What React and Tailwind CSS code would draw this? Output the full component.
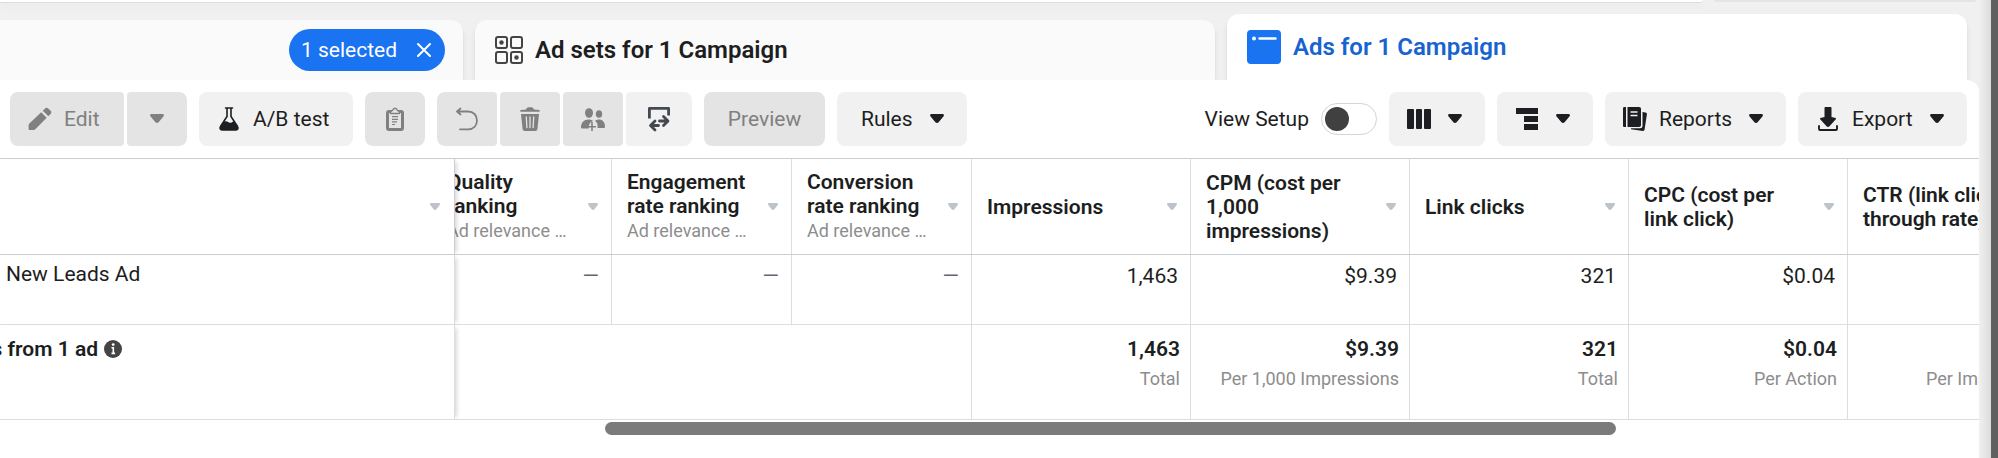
import React from 'react';

const columns = [
  { title: 'Impressions', value: '1,463', total: '1,463', note: 'Total' },
  { title: 'CPM (cost per 1,000 impressions)', value: '$9.39', total: '$9.39', note: 'Per 1,000 Impressions' },
  { title: 'Link clicks', value: '321', total: '321', note: 'Total' },
  { title: 'CPC (cost per link click)', value: '$0.04', total: '$0.04', note: 'Per Action' },
  { title: 'CTR (link click-through rate)', value: '', total: '', note: 'Per Impressions' },
];

const rankings = ['Quality ranking', 'Engagement rate ranking', 'Conversion rate ranking'];

const Caret = () => (
  <svg width="14" height="10" viewBox="0 0 14 10" fill="currentColor" className="shrink-0" aria-hidden="true">
    <path d="M1.5 0h11c1.5 0 1.8 1.6.9 2.6L8.600 8.300c-.9 1-2.300 1-3.200 0L.6 2.600C-.3 1.600 0 0 1.500 0z" />
  </svg>
);

const SortCaret = () => (
  <svg width="10" height="7" viewBox="0 0 10 7" className="shrink-0" fill="#bec3c9" aria-hidden="true">
    <path d="M1 0h8c1 0 1.300 1 .7 1.900L6.400 6.200c-.8 1-2 1-2.800 0L.3 1.900C-.3 1 0 0 1 0z" />
  </svg>
);

const PencilIcon = () => (
  <svg width="24" height="24" viewBox="0 0 24 24" fill="currentColor" aria-hidden="true">
    <path d="M13.200 5.300l5.500 5.500L7.300 22.200c-.5.5-1 .8-1.700.8H1.800C1 23 .6 22.600.6 21.800v-3.600c0-.7.300-1.200.8-1.700z" />
    <path d="M14.800 3.700L17.100 1.400c1-1 2.100-1 3.100 0l2.400 2.400c1 1 1 2.100 0 3.100L20.300 9.200z" />
  </svg>
);

const FlaskIcon = () => (
  <svg width="22" height="24" viewBox="0 0 22 24" aria-hidden="true">
    <path d="M6.500 1h7M8 1v8.500L1.500 19.500C.5 21.500 1.500 23 3.500 23h13c2 0 3-1.500 2-3.500L12 9.500V1" fill="none" stroke="currentColor" strokeWidth="1.600" strokeLinecap="round" />
    <path d="M4.500 14.500c2-.6 3.500-.4 5.500.9 1.500.9 3 .2 4.600-1.400l4 5.500c.8 1.800 0 3.500-1.500 3.500H3c-1.500 0-2.300-1.700-1.500-3.500z" fill="currentColor" />
  </svg>
);

const ClipboardIcon = () => (
  <svg width="18" height="24" viewBox="0 0 18 24" fill="none" stroke="currentColor" aria-hidden="true">
    <rect x="1.500" y="4.500" width="15" height="18" rx="1.500" strokeWidth="3" />
    <path d="M4.500 6.500V4.800L6.500 3.500c1-3 4-3 5 0l2 1.300v1.700z" fill="#e4e4e4" strokeWidth="1.300" strokeLinejoin="round" />
    <path d="M6 9.700h6M6 12.300h6M6 14.900h5M6 17.500h3" strokeWidth="1.200" />
  </svg>
);

const UndoIcon = () => (
  <svg width="22" height="24" viewBox="0 0 22 24" fill="none" stroke="currentColor" strokeWidth="1.800" strokeLinecap="round" strokeLinejoin="round" aria-hidden="true">
    <path d="M4.500 1.500L1 4.500l3.500 3M1.500 4.500H12c5.500 0 9 3.700 9 8.900S17.500 22.300 12 22.300H4" />
  </svg>
);

const TrashIcon = () => (
  <svg width="20" height="24" viewBox="0 0 20 24" aria-hidden="true">
    <path d="M.8 4.800c-.8 0-.8-1.500 0-1.700L6 2.500C6.800 1 7.500.3 8.500.3h3c1 0 1.700.7 2.500 2.200l5.200.6c.8.200.8 1.700 0 1.700z" fill="currentColor" />
    <path d="M1 7h18l-1.500 14.500c-.2 1.700-1 2.500-2.500 2.500H5c-1.500 0-2.300-.8-2.500-2.500z" fill="currentColor" />
    <path d="M6.300 10l.6 10.500M10 10v10.500M13.700 10l-.6 10.500" stroke="#e4e4e4" strokeWidth="1.300" strokeLinecap="round" />
  </svg>
);

const PeopleIcon = () => (
  <svg width="24" height="24" viewBox="0 0 24 24" fill="currentColor" aria-hidden="true">
    <ellipse cx="8" cy="6" rx="4" ry="4.800" />
    <ellipse cx="18" cy="7" rx="3.200" ry="3.800" />
    <path d="M0 20.500c0-5 3-8 7.500-8 2 0 3.500.5 4.500 1.500-3 1-4.500 3.500-4.300 7.500H1.500C.5 21.500 0 21.300 0 20.500zM14 14c1-1 2.300-1.500 4-1.500 3.500 0 6 2.700 6 7 0 1-.5 1.500-1.500 1.500h-6c.5-3.500-.5-6-2.500-7z" />
    <path d="M11 15v9M7 19.800h8" fill="none" stroke="currentColor" strokeWidth="1.600" />
  </svg>
);

const SwapIcon = () => (
  <svg width="22" height="26" viewBox="0 0 22 26" fill="none" stroke="#444950" strokeWidth="2.800" aria-hidden="true">
    <path d="M1.400 12.500V2.400h19.200V9.500" strokeLinejoin="round" />
    <path d="M11.500 15h8M15.500 10.500l4.500 4.500-4.500 4.500M10.500 19.500H3M7 15l-4.500 4.500L7 24" strokeLinecap="round" strokeLinejoin="round" />
  </svg>
);

const ColumnsIcon = () => (
  <svg width="24" height="20" viewBox="0 0 24 20" fill="currentColor" aria-hidden="true">
    <rect width="7" height="20" rx="1" />
    <rect x="9" width="6" height="20" rx="1" />
    <rect x="17" width="7" height="20" rx="1" />
  </svg>
);

const BreakdownIcon = () => (
  <svg width="24" height="22" viewBox="0 0 24 22" fill="currentColor" aria-hidden="true">
    <path d="M1 0h22v6H1zM9 8h14v6H9zM9 16h14v6H9z" />
  </svg>
);

const ReportsIcon = () => (
  <svg width="24" height="24" viewBox="0 0 24 24" fill="currentColor" aria-hidden="true">
    <path d="M1.500 0H3v20H1.500C.5 20 0 19.500 0 18.500v-17C0 .5.500 0 1.500 0zM4.500 0H16c1.300 0 2 .7 2 2v16c0 1.300-.7 2-2 2H4.500z" />
    <path d="M7.500 5h7M7.500 8.500h7" stroke="#f1f1f1" strokeWidth="1.400" />
    <path d="M19.500 5l3 .4c1 .1 1.600.8 1.400 1.800L21.600 22.500c-.1 1-.8 1.500-1.800 1.400L8 22.300v-1h9c1.700 0 2.500-.8 2.500-2.500z" />
  </svg>
);

const ExportIcon = () => (
  <svg width="20" height="24" viewBox="0 0 20 24" fill="currentColor" aria-hidden="true">
    <path d="M7.500 0h5c.8 0 1 .5 1 1v9l4 1c.6.2.7.8.3 1.300l-6.300 7c-.9 1-2.100 1-3 0l-6.300-7c-.4-.5-.3-1.100.3-1.300l4-1V1c0-.5.200-1 1-1z" />
    <path d="M1 19v3c0 .7.300 1 1 1h16c.7 0 1-.3 1-1v-3" fill="none" stroke="currentColor" strokeWidth="1.900" strokeLinecap="round" />
  </svg>
);

const GridIcon = () => (
  <svg width="28" height="28" viewBox="0 0 28 28" fill="none" stroke="#444" strokeWidth="2" aria-hidden="true">
    <rect x="1" y="1" width="11" height="11" rx="2" />
    <rect x="16" y="1" width="11" height="11" rx="2" />
    <rect x="1" y="16" width="11" height="11" rx="2" />
    <rect x="16" y="16" width="11" height="11" rx="2" />
    <circle cx="6.500" cy="6.500" r="2.200" fill="#444" stroke="none" />
    <circle cx="21.500" cy="21.500" r="2.200" fill="#444" stroke="none" />
  </svg>
);

const AdIcon = () => (
  <svg width="34" height="34" viewBox="0 0 34 34" aria-hidden="true">
    <rect width="34" height="34" rx="4" fill="#1a73f0" />
    <circle cx="7" cy="8.500" r="2" fill="#fff" />
    <path d="M12.500 8.500h16" stroke="#fff" strokeWidth="2.400" strokeLinecap="round" />
  </svg>
);

const InfoIcon = () => (
  <svg width="18" height="18" viewBox="0 0 18 18" className="shrink-0" aria-hidden="true">
    <circle cx="9" cy="9" r="9" fill="#444" />
    <path d="M7.500 7.800h1.800V13M7.500 13.400h3.600" stroke="#fff" strokeWidth="1.600" fill="none" />
    <circle cx="9.200" cy="4.600" r="1.400" fill="#fff" />
  </svg>
);

const ToolButton = ({ className, children, ...rest }) => (
  <button type="button" className={`flex h-[54px] items-center ${className}`} {...rest}>
    {children}
  </button>
);

const MenuButton = ({ className, children, ...rest }) => (
  <ToolButton className={`gap-3 rounded-lg bg-[#f1f1f1] pr-[23px] ${className}`} {...rest}>
    {children}
    <span className="ml-auto"><Caret /></span>
  </ToolButton>
);

const App = () => {
  return (
    <div className="flex min-h-screen overflow-hidden bg-white font-['Roboto',sans-serif] text-[21px]/6 text-[#1c1e21]">
      <main className="flex min-w-0 flex-1 flex-col bg-[#f0f0f0]">
        {/* Bottom edge of the filter bar */}
        <div className="flex h-[14px] items-start gap-[11px] pr-[3px]">
          <div className="h-[3px] flex-1 rounded-br-lg border-b border-[#dcdcdc] bg-white shadow-md" />
          <div className="h-[2px] w-[262px] rounded-b-lg bg-[#e4e4e4]" />
        </div>

        <div className="flex items-end gap-3 pr-3" role="tablist">
          <div className="flex h-[60px] w-[463px] shrink-0 items-center justify-end rounded-tr-xl bg-[#fafafa] pr-[18px] shadow-md">
            <button type="button" className="flex h-[42px] w-[156px] items-center justify-between rounded-full bg-[#1a73f0] pl-3 pr-3.5 text-white">
              1 selected
              <svg width="14" height="14" viewBox="0 0 14 14" stroke="currentColor" strokeWidth="2" strokeLinecap="round" aria-hidden="true">
                <path d="M1 1l12 12M13 1L1 13" />
              </svg>
            </button>
          </div>
          <button type="button" role="tab" aria-selected="false" className="flex h-[60px] flex-1 items-center gap-3 rounded-t-xl bg-[#fafafa] pl-5 text-2xl/7 font-semibold shadow-md">
            <GridIcon />
            Ad sets for 1 Campaign
          </button>
          <button type="button" role="tab" aria-selected="true" className="flex h-[66px] flex-1 items-center gap-3 rounded-t-xl bg-white pl-5 text-2xl/7 font-semibold text-[#1763cf] shadow-md">
            <AdIcon />
            Ads for 1 Campaign
          </button>
        </div>

        <section className="relative flex-1 overflow-hidden rounded-tr-xl bg-white">
          <div className="flex items-center justify-between py-3 pl-2.5 pr-3">
            <div className="flex gap-3">
              <div className="flex gap-[3px]">
                <ToolButton disabled className="w-[114px] gap-3 rounded-l-lg rounded-r-sm bg-[#e4e4e4] pl-[18px] text-[#808080]">
                  <PencilIcon />
                  Edit
                </ToolButton>
                <ToolButton disabled aria-label="More edit options" className="w-[60px] justify-center rounded-l-sm rounded-r-lg bg-[#e4e4e4] text-[#808080]">
                  <Caret />
                </ToolButton>
              </div>
              <ToolButton className="w-[154px] gap-3 rounded-lg bg-[#f1f1f1] pl-5">
                <FlaskIcon />
                A/B test
              </ToolButton>
              <ToolButton disabled aria-label="Copy" className="w-[60px] justify-center rounded-lg bg-[#e4e4e4] text-[#808080]">
                <ClipboardIcon />
              </ToolButton>
              <div className="flex gap-[3px]">
                <ToolButton disabled aria-label="Undo" className="w-[60px] justify-center rounded-l-lg rounded-r-sm bg-[#e4e4e4] text-[#808080]">
                  <UndoIcon />
                </ToolButton>
                <ToolButton disabled aria-label="Delete" className="w-[60px] justify-center rounded-sm bg-[#e4e4e4] text-[#808080]">
                  <TrashIcon />
                </ToolButton>
                <ToolButton disabled aria-label="Add people" className="w-[60px] justify-center rounded-sm bg-[#e4e4e4] text-[#808080]">
                  <PeopleIcon />
                </ToolButton>
                <ToolButton aria-label="Import and export" className="w-[66px] justify-center rounded-l-sm rounded-r-lg bg-[#f1f1f1]">
                  <SwapIcon />
                </ToolButton>
              </div>
              <ToolButton disabled className="w-[121px] justify-center rounded-lg bg-[#e4e4e4] text-[#808080]">
                Preview
              </ToolButton>
              <MenuButton className="w-[130px] pl-6">Rules</MenuButton>
            </div>

            <div className="flex items-center gap-3">
              <label className="flex items-center gap-3 whitespace-nowrap">
                View Setup
                <input
                  type="checkbox"
                  role="switch"
                  className="h-8 w-14 appearance-none rounded-full border border-[#d4d4d4] bg-white p-[3px] before:block before:size-6 before:rounded-full before:bg-[#404040] checked:before:ml-6"
                />
              </label>
              <MenuButton aria-label="Columns" className="w-24 pl-[18px]">
                <ColumnsIcon />
              </MenuButton>
              <MenuButton aria-label="Breakdown" className="w-24 pl-[18px]">
                <BreakdownIcon />
              </MenuButton>
              <MenuButton className="w-[181px] pl-[18px]">
                <ReportsIcon />
                Reports
              </MenuButton>
              <MenuButton className="w-[169px] pl-5">
                <ExportIcon />
                <span className="pl-0.5">Export</span>
              </MenuButton>
            </div>
          </div>

          <div className="overflow-hidden">
            <table className="w-[2067px] table-fixed border-separate border-spacing-0 border-t border-[#ccced2]">
              <colgroup>
                <col className="w-[455px]" />
                <col className="w-[157px]" />
                <col className="w-[180px]" />
                <col className="w-[180px]" />
                {columns.map((c) => <col key={c.title} className="w-[219px]" />)}
              </colgroup>
              <thead>
                <tr className="text-left *:border-b *:border-[#ccced2] *:p-0 *:font-semibold">
                  <th scope="col" className="relative border-r shadow-[5px_0_4px_-3px_rgba(0,0,0,0.15)]" aria-label="Ad name">
                    <div className="flex justify-end pr-3.5"><SortCaret /></div>
                  </th>
                  {rankings.map((title) => (
                    <th key={title} scope="col">
                      <div className="flex justify-end overflow-hidden">
                        <div className="flex h-[95px] w-[180px] shrink-0 items-center justify-between border-r border-[#dadde1] pl-[15px] pr-[13px]">
                          <div className="w-[124px]">
                            {title}
                            <div className="whitespace-nowrap text-lg/[26px] font-normal text-[#8d8d8d]">Ad relevance …</div>
                          </div>
                          <SortCaret />
                        </div>
                      </div>
                    </th>
                  ))}
                  {columns.map((c) => (
                    <th key={c.title} scope="col">
                      <div className="flex h-[95px] items-center justify-between border-r border-[#dadde1] pl-[15px] pr-[13px]">
                        <div className="w-[155px]">{c.title}</div>
                        <SortCaret />
                      </div>
                    </th>
                  ))}
                </tr>
              </thead>
              <tbody>
                <tr className="h-[70px] text-right align-top *:border-b *:border-r *:border-[#dadde1] *:pr-3 *:pt-[9px]">
                  <td className="relative shadow-[5px_0_4px_-3px_rgba(0,0,0,0.15)]">
                    <div className="pl-1.5 text-left leading-5">New Leads Ad</div>
                  </td>
                  {rankings.map((title) => <td key={title} className="text-[#606770]">—</td>)}
                  {columns.map((c) => <td key={c.title}>{c.value}</td>)}
                </tr>
                <tr className="h-[95px] text-right align-top *:border-b *:border-r *:border-[#dadde1] *:pr-2.5 *:pt-3">
                  <td className="relative shadow-[5px_0_4px_-3px_rgba(0,0,0,0.15)]">
                    <div className="flex w-[122px] items-center justify-end gap-1.5 overflow-hidden whitespace-nowrap font-semibold">
                      Results from 1 ad
                      <InfoIcon />
                    </div>
                  </td>
                  <td colSpan={3} />
                  {columns.map((c) => (
                    <td key={c.title}>
                      <div className="h-6 font-semibold">{c.total}</div>
                      <div className="pt-1.5 text-lg/6 text-[#8d8d8d]">{c.note}</div>
                    </td>
                  ))}
                </tr>
              </tbody>
            </table>
          </div>
          <div className="pb-5 pt-[2px]">
            <div className="ml-[605px] h-[13px] w-[1011px] rounded-full bg-[#7b7b7b]" />
          </div>
        </section>
      </main>
      <div className="w-3 shrink-0 bg-linear-to-r from-[#f0f0f0] to-[#dcdcdc]" />
      <div className="w-[7px] shrink-0 bg-[#606060]" />
    </div>
  );
};

export default App;
